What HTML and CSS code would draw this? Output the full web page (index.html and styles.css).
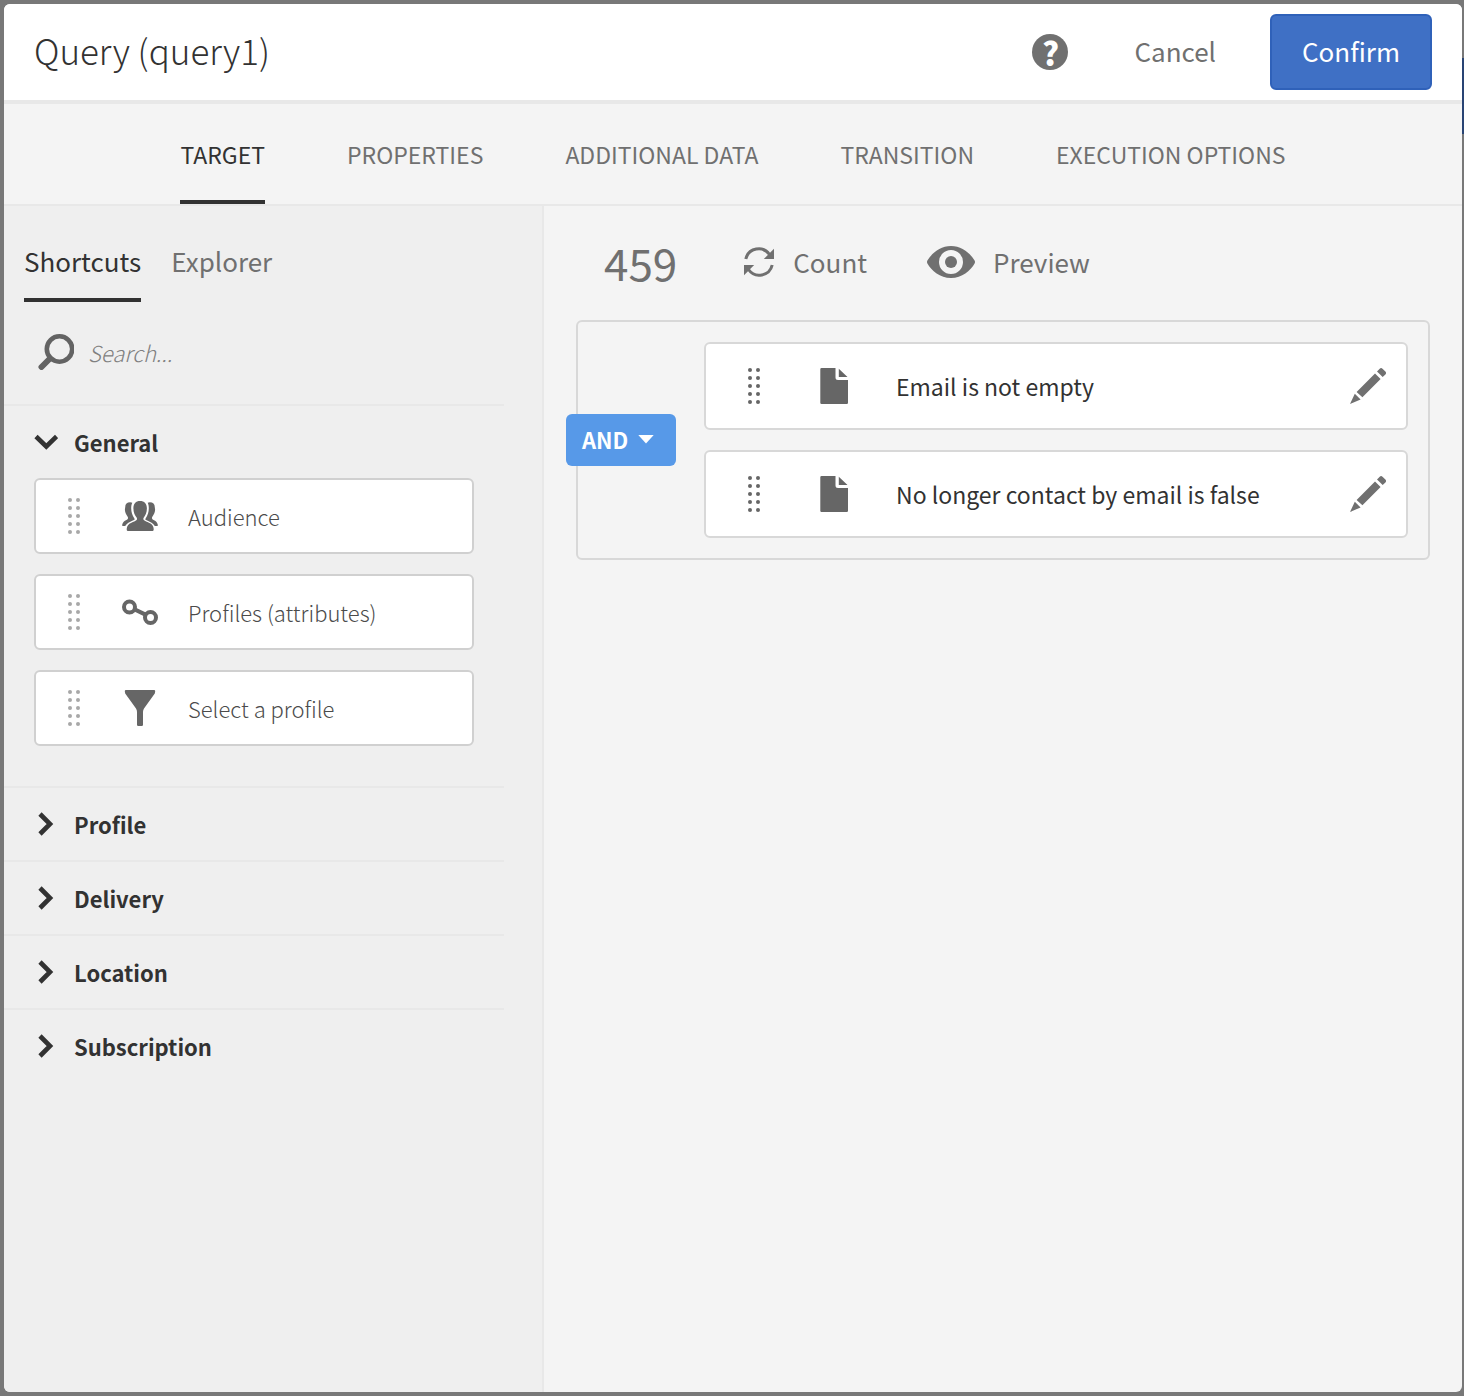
FILE: index.html
```
<!DOCTYPE html>
<html lang="en">
<head>
<meta charset="utf-8">
<title>Query (query1)</title>
<link rel="stylesheet" href="styles.css">
</head>
<body>
<svg class="sprite" aria-hidden="true">
  <symbol id="grip" viewBox="0 0 12 36">
    <circle cx="2" cy="2" r="2"/><circle cx="10" cy="2" r="2"/>
    <circle cx="2" cy="10" r="2"/><circle cx="10" cy="10" r="2"/>
    <circle cx="2" cy="18" r="2"/><circle cx="10" cy="18" r="2"/>
    <circle cx="2" cy="26" r="2"/><circle cx="10" cy="26" r="2"/>
    <circle cx="2" cy="34" r="2"/><circle cx="10" cy="34" r="2"/>
  </symbol>
  <symbol id="file" viewBox="0 0 36 36">
    <path d="M5.500 0H19.500v9.500a2.500 2.500 0 0 0 2.500 2.500H32v22.800a1.200 1.200 0 0 1-1.200 1.200H5.500A1.200 1.200 0 0 1 4.300 34.800V1.200A1.200 1.200 0 0 1 5.500 0zM22.800 .8 31.500 9H22.800z"/>
  </symbol>
  <symbol id="pencil" viewBox="0 0 36 36">
    <path d="M0 36 4.800 25.800 10.600 31.400zM6.600 24 25 5.400 30.600 11 12.400 29.200zM27 3.400 29.700.7a2 2 0 0 1 2.800 0l2.900 2.900a2 2 0 0 1 0 2.800L32.700 9.100z"/>
  </symbol>
  <symbol id="chevron-right" viewBox="0 0 24 24">
    <path d="M6 2 16 12 6 22" fill="none" stroke="currentColor" stroke-width="4.600"/>
  </symbol>
  <symbol id="chevron-down" viewBox="0 0 24 24">
    <path d="M2 6.500 12.300 16.500 22.600 6.500" fill="none" stroke="currentColor" stroke-width="4.600"/>
  </symbol>
</svg>

<div class="backdrop" aria-hidden="true"><span class="backdrop-button"></span></div>

<main class="dialog">
  <header class="dialog-header">
    <h1>Query (query1)</h1>
    <button class="help" type="button" aria-label="Help"><span>?</span></button>
    <button class="cancel" type="button">Cancel</button>
    <button class="confirm" type="button">Confirm</button>
  </header>

  <nav class="tabs">
    <a class="tab active" href="#target">TARGET</a>
    <a class="tab" href="#properties">PROPERTIES</a>
    <a class="tab" href="#additional">ADDITIONAL DATA</a>
    <a class="tab" href="#transition">TRANSITION</a>
    <a class="tab" href="#execution">EXECUTION OPTIONS</a>
  </nav>

  <div class="workspace">
    <aside class="palette">
      <nav class="subtabs">
        <a class="subtab active" href="#shortcuts">Shortcuts</a>
        <a class="subtab" href="#explorer">Explorer</a>
      </nav>
      <label class="search">
        <svg class="icon" viewBox="0 0 36 36" aria-hidden="true"><g fill="none" stroke="currentColor"><circle cx="21.500" cy="15" r="12.700" stroke-width="4.600"/><path d="M12 24.500 3.500 33" stroke-width="6" stroke-linecap="round"/></g></svg>
        <input type="text" placeholder="Search..." aria-label="Search">
      </label>

      <section class="group">
        <button class="group-head" type="button" aria-expanded="true"><svg class="chevron" aria-hidden="true"><use href="#chevron-down"/></svg>General</button>
        <ul class="shortcuts">
          <li class="shortcut">
            <svg class="grip" aria-hidden="true"><use href="#grip"/></svg>
            <svg class="icon" viewBox="0 0 36 36" aria-hidden="true">
              <path d="M18 3c4.400 0 6.900 2.600 6.900 7.300 0 4.200-1.500 7.200-3.100 9.200-.6.800-.6 1.900 0 2.500 1.300 1.200 3.200 1.900 5.200 2.700 3 1.200 4.600 3.100 4.700 6.300 0 1.300-.3 2-1 2H5.700c-.7 0-1-.7-1-2 .1-3.200 1.700-5.100 4.700-6.300 2-.8 3.900-1.500 5.200-2.700.6-.6.6-1.700 0-2.500-1.700-2-3.200-5-3.200-9.200C11.400 5.600 13.800 3 18 3z"/>
              <path id="side" d="M10.300 4.700C9.500 6.300 9.200 8 9.200 10.300c0 3.700 1 6.900 3.200 10.100.4.700.3 1.200-.4 1.600-2 1.200-5.200 1.800-7.400 4.200C3.700 27.200 3.300 28 2.900 28H.8c-.6 0-.8-.5-.6-1.300.5-2 1.700-3.400 3.700-4.400C6.300 21 6.500 20 5.500 18.400 4.300 16.500 3 14.600 2.900 11.700c0-1.100.3-1.600.3-2.500C3.200 6 5 4.200 8.200 4.200c.8 0 1.500.2 2.100.5z"/>
              <use href="#side" transform="matrix(-1 0 0 1 36 0)"/>
            </svg>
            <span>Audience</span>
          </li>
          <li class="shortcut">
            <svg class="grip" aria-hidden="true"><use href="#grip"/></svg>
            <svg class="icon" viewBox="0 0 36 36" aria-hidden="true"><g fill="none" stroke="currentColor" stroke-width="4"><circle cx="7.500" cy="13" r="5.500"/><circle cx="28.500" cy="23.500" r="5.500"/><path d="M12.600 15.400 23.500 20.600"/></g></svg>
            <span>Profiles (attributes)</span>
          </li>
          <li class="shortcut">
            <svg class="grip" aria-hidden="true"><use href="#grip"/></svg>
            <svg class="icon" viewBox="0 0 36 36" aria-hidden="true"><path d="M4 0h28a1.200 1.200 0 0 1 1.200 1.300L32.800 3.500 22 18.500Q21 20 21 22V34.800a1.200 1.200 0 0 1-1.200 1.200h-3.600a1.200 1.200 0 0 1-1.200-1.200V22q0-2-1-3.500L3.200 3.500 2.800 1.300A1.200 1.200 0 0 1 4 0z"/></svg>
            <span>Select a profile</span>
          </li>
        </ul>
      </section>
      <section class="group"><button class="group-head" type="button" aria-expanded="false"><svg class="chevron" aria-hidden="true"><use href="#chevron-right"/></svg>Profile</button></section>
      <section class="group"><button class="group-head" type="button" aria-expanded="false"><svg class="chevron" aria-hidden="true"><use href="#chevron-right"/></svg>Delivery</button></section>
      <section class="group"><button class="group-head" type="button" aria-expanded="false"><svg class="chevron" aria-hidden="true"><use href="#chevron-right"/></svg>Location</button></section>
      <section class="group"><button class="group-head" type="button" aria-expanded="false"><svg class="chevron" aria-hidden="true"><use href="#chevron-right"/></svg>Subscription</button></section>
    </aside>

    <section class="editor">
      <div class="toolbar">
        <output class="total">459</output>
        <button class="tool" type="button">
          <svg class="refresh" viewBox="0 0 32 32" aria-hidden="true"><g fill="none" stroke="currentColor" stroke-width="3"><path d="M2.800 13A13.200 13.200 0 0 1 26.500 8.500"/><path d="M29.200 19A13.200 13.200 0 0 1 5.500 23.500"/></g><path d="M31 2.800V13H20.800z"/><path d="M1 29.200V19h10.200z"/></svg>
          Count
        </button>
        <button class="tool" type="button">
          <svg class="eye" viewBox="0 0 48 32" aria-hidden="true"><path fill-rule="evenodd" d="M24 0C35 0 43.500 7.500 47.600 14.600Q48.400 16 47.600 17.400C43.500 24.500 35 32 24 32S4.500 24.500.4 17.400Q-.4 16 .4 14.600C4.500 7.500 13 0 24 0zM24 4a12 12 0 1 0 0 24 12 12 0 1 0 0-24z"/><circle cx="24" cy="16" r="6"/></svg>
          Preview
        </button>
      </div>

      <div class="rule-group">
        <div class="operator-cell">
          <button class="operator" type="button" aria-haspopup="true">AND<svg viewBox="0 0 16 10" aria-hidden="true"><path d="M.3 1h15.400L8 9.500z"/></svg></button>
        </div>
        <ul class="rules">
          <li class="rule">
            <svg class="grip" aria-hidden="true"><use href="#grip"/></svg>
            <svg class="icon" aria-hidden="true"><use href="#file"/></svg>
            <span>Email is not empty</span>
            <button class="edit" type="button" aria-label="Edit Email is not empty"><svg class="icon" aria-hidden="true"><use href="#pencil"/></svg></button>
          </li>
          <li class="rule">
            <svg class="grip" aria-hidden="true"><use href="#grip"/></svg>
            <svg class="icon" aria-hidden="true"><use href="#file"/></svg>
            <span>No longer contact by email is false</span>
            <button class="edit" type="button" aria-label="Edit No longer contact by email is false"><svg class="icon" aria-hidden="true"><use href="#pencil"/></svg></button>
          </li>
        </ul>
      </div>
    </section>
  </div>
</main>
</body>
</html>
```
FILE: styles.css
```
* { box-sizing: border-box; }

body {
  margin: 0;
  min-height: 100vh;
  padding: 4px 2px 4px 4px;
  display: flex;
  background: #787878;
  color: #323232;
  font-family: "Noto Sans CJK SC", "Noto Sans", sans-serif;
  font-size: 23px;
  line-height: 32px;
}

button, input {
  margin: 0;
  padding: 0;
  border: 0;
  background: none;
  color: inherit;
  font: inherit;
}

a { color: inherit; text-decoration: none; }
ul { margin: 0; padding: 0; list-style: none; }
svg { display: block; flex: none; fill: currentColor; }

.sprite { position: absolute; width: 0; height: 0; }
.icon { width: 36px; height: 36px; }
.grip { width: 12px; height: 36px; }
.chevron { width: 24px; height: 24px; }

/* Dimmed page behind the dialog */
.backdrop { position: absolute; inset: 0; overflow: hidden; z-index: -1; }
.backdrop-button {
  position: absolute;
  top: 58px;
  right: 0;
  width: 20px;
  height: 76px;
  background: #294474;
}

.dialog {
  flex: 1;
  display: flex;
  flex-direction: column;
  overflow: hidden;
  border-radius: 6px;
  background: #f4f4f4;
}

.dialog-header {
  display: flex;
  align-items: center;
  padding: 10px 30px;
  border-bottom: 4px solid #e8e8e8;
  background: #fff;
}
.dialog-header h1 {
  flex: 1;
  margin: 0;
  padding-bottom: 4px;
  font-size: 35px;
  font-weight: 300;
  line-height: 48px;
}
.help {
  width: 36px;
  height: 36px;
  border-radius: 50%;
  background: #707070;
  color: #fff;
  font-size: 32px;
  font-weight: 900;
  line-height: 36px;
}
.help span { display: block; }
.cancel {
  padding: 0 54px 2px 66px;
  color: #707070;
  font-size: 26px;
}
.confirm {
  min-width: 162px;
  height: 76px;
  padding-bottom: 2px;
  border: 2px solid #2f61b9;
  border-radius: 6px;
  background: #3f70c5;
  color: #fff;
  font-size: 26px;
}

.tabs {
  display: flex;
  justify-content: center;
  gap: 82px;
  border-bottom: 2px solid #e8e8e8;
  color: #707070;
}
.tab {
  padding: 34px 0 30px;
  border-bottom: 4px solid transparent;
}
.active { border-color: #323232; color: #323232; }

.workspace { flex: 1; display: flex; }

.palette {
  width: 540px;
  flex: none;
  padding-right: 38px;
  border-right: 2px solid #e8e8e8;
  background: #efefef;
}
.subtabs {
  display: flex;
  gap: 30px;
  padding-left: 20px;
  color: #707070;
  font-size: 26px;
}
.subtab { padding: 39px 0 21px; border-bottom: 4px solid transparent; }
.subtab.active { border-color: #323232; }

.search {
  display: flex;
  align-items: center;
  gap: 14px;
  height: 102px;
  padding: 0 0 2px 34px;
  color: #636363;
}
.search input {
  flex: 1;
  min-width: 0;
  height: 36px;
  outline: 0;
  font-size: 22px;
  font-style: italic;
  font-weight: 300;
}
.search input::placeholder { color: #808080; opacity: 1; }

.group { border-top: 2px solid #e8e8e8; }
.group-head {
  display: flex;
  align-items: center;
  gap: 16px;
  width: 100%;
  height: 72px;
  padding-left: 30px;
  font-size: 22px;
  font-weight: 700;
}
.shortcuts {
  display: flex;
  flex-direction: column;
  gap: 20px;
  padding: 0 30px 40px;
}
.shortcut {
  display: flex;
  align-items: center;
  height: 76px;
  padding-left: 32px;
  border: 2px solid #d0d0d0;
  border-radius: 6px;
  background: #fff;
  color: #666;
}
.shortcut .grip { margin-right: 42px; color: #a8a8a8; }
.shortcut .icon { margin-right: 30px; }
.shortcut span { color: #4b4b4b; font-size: 22px; font-weight: 300; }

.editor { flex: 1; min-width: 0; padding: 24px 32px; }
.toolbar {
  display: flex;
  align-items: center;
  gap: 60px;
  height: 64px;
  margin-bottom: 26px;
  padding-left: 28px;
  color: #707070;
}
.total { margin-right: 6px; font-size: 44px; line-height: 64px; }
.tool {
  display: flex;
  align-items: center;
  gap: 18px;
  font-size: 26px;
}
.refresh { width: 32px; height: 32px; }
.eye { width: 48px; height: 32px; }

.rule-group {
  display: flex;
  align-items: center;
  padding: 20px;
  border: 2px solid #d8d8d8;
  border-radius: 6px;
}
.operator-cell { width: 106px; flex: none; }
.operator {
  display: flex;
  align-items: center;
  gap: 10px;
  width: 110px;
  height: 52px;
  margin-left: -32px;
  padding: 0 0 2px 16px;
  border-radius: 6px;
  background: #5799e8;
  color: #fff;
  font-size: 22px;
  font-weight: 700;
}
.operator svg { width: 16px; height: 10px; }
.rules {
  flex: 1;
  display: flex;
  flex-direction: column;
  gap: 20px;
}
.rule {
  display: flex;
  align-items: center;
  height: 88px;
  padding: 0 20px 0 42px;
  border: 2px solid #d8d8d8;
  border-radius: 6px;
  background: #fff;
  color: #666;
}
.rule .grip { margin-right: 56px; }
.rule span { flex: 1; margin-left: 44px; color: #323232; }
.edit { color: #707070; }
```
